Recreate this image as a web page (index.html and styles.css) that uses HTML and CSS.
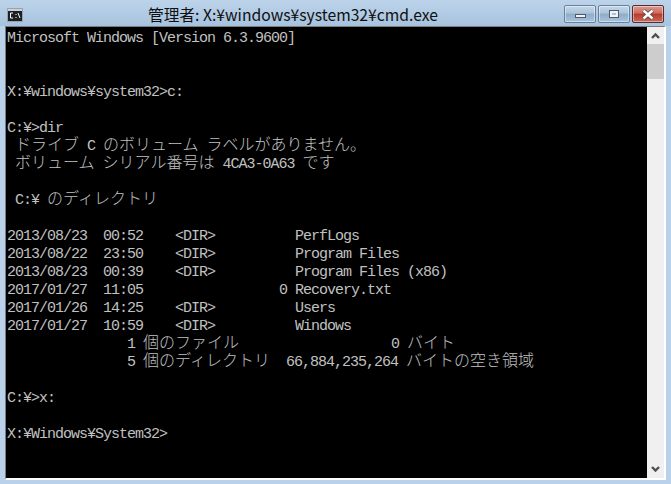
FILE: index.html
```html
<!DOCTYPE html>
<html lang="ja">
<head>
<meta charset="utf-8">
<title>cmd.exe</title>
<link rel="stylesheet" href="styles.css">
</head>
<body>
<div class="window">
  <header class="titlebar">
    <svg class="appicon" width="16" height="14" viewBox="0 0 16 14"><rect x="0.5" y="0.5" width="15" height="13" fill="#1c2024" stroke="#9aa3ab"/><rect x="1" y="1" width="14" height="2" fill="#c9d2da"/><path d="M6 5H3.5V10H6M9 6V7M9 9V10M11 5L13 10" fill="none" stroke="#fff"/></svg>
    <div class="title">管理者: X:¥windows¥system32¥cmd.exe</div>
    <div class="controls">
      <div class="btn"><span class="glyph-min"></span></div>
      <div class="btn"><span class="glyph-max"></span></div>
      <div class="btn close">
        <svg width="14" height="11" viewBox="0 0 14 11"><path d="M2.5 1.5L11.5 9.5M11.5 1.5L2.5 9.5" stroke="#4a4a4a" stroke-width="4"/><path d="M2.5 1.5L11.5 9.5M11.5 1.5L2.5 9.5" stroke="#fff" stroke-width="2.4"/></svg>
      </div>
    </div>
  </header>
  <div class="client">
    <main class="console">
<div class="ln">Microsoft Windows [Version 6.3.9600]</div>
<div class="ln"></div>
<div class="ln"></div>
<div class="ln">X:¥windows¥system32&gt;c:</div>
<div class="ln"></div>
<div class="ln">C:¥&gt;dir</div>
<div class="ln"> <span class="j">ドライブ</span> C <span class="j">のボリューム</span> <span class="j">ラベルがありません。</span></div>
<div class="ln"> <span class="j">ボリューム</span> <span class="j">シリアル番号は</span> 4CA3-0A63 <span class="j">です</span></div>
<div class="ln"></div>
<div class="ln"> C:¥ <span class="j">のディレクトリ</span></div>
<div class="ln"></div>
<div class="ln">2013/08/23  00:52    &lt;DIR&gt;          PerfLogs</div>
<div class="ln">2013/08/22  23:50    &lt;DIR&gt;          Program Files</div>
<div class="ln">2013/08/23  00:39    &lt;DIR&gt;          Program Files (x86)</div>
<div class="ln">2017/01/27  11:05                 0 Recovery.txt</div>
<div class="ln">2017/01/26  14:25    &lt;DIR&gt;          Users</div>
<div class="ln">2017/01/27  10:59    &lt;DIR&gt;          Windows</div>
<div class="ln">               1 <span class="j">個のファイル</span>                   0 <span class="j">バイト</span></div>
<div class="ln">               5 <span class="j">個のディレクトリ</span>  66,884,235,264 <span class="j">バイトの空き領域</span></div>
<div class="ln"></div>
<div class="ln">C:¥&gt;x:</div>
<div class="ln"></div>
<div class="ln">X:¥Windows¥System32&gt;</div>
    </main>
    <aside class="scrollbar">
      <div class="arrow"><svg width="9" height="7" viewBox="0 0 9 7"><path d="M1 6L4.5 2.5L8 6" fill="none" stroke="#505050" stroke-width="2.4"/></svg></div>
      <div class="thumb"></div>
      <div class="track"></div>
      <div class="arrow"><svg width="9" height="7" viewBox="0 0 9 7"><path d="M1 1L4.5 4.5L8 1" fill="none" stroke="#505050" stroke-width="2.4"/></svg></div>
    </aside>
  </div>
</div>
</body>
</html>
```

FILE: styles.css
```css
html, body {
  margin: 0;
  padding: 0;
  width: 671px;
  height: 484px;
  overflow: hidden;
  background: #b9d1ea;
}
.window {
  width: 671px;
  height: 484px;
  display: flex;
  flex-direction: column;
  background: #b9d1ea;
}
.titlebar {
  height: 26px;
  flex: none;
  display: flex;
  align-items: flex-start;
  padding-left: 7px;
  background: linear-gradient(#bcd3ea, #a8c3de);
}
.appicon {
  margin-top: 8px;
  flex: none;
}
.title {
  margin-left: 125px;
  margin-top: 3px;
  font: 15.7px/24px "Noto Sans CJK JP", sans-serif;
  color: #101010;
  white-space: pre;
  flex: none;
}
.controls {
  margin-left: auto;
  padding: 5px 7px 0 0;
  display: flex;
  gap: 2px;
}
.btn {
  width: 30px;
  height: 16px;
  border: 1px solid #6b8098;
  border-radius: 2px;
  box-shadow: inset 0 0 0 1px rgba(255,255,255,.45);
  background: linear-gradient(#c6d7e8, #aac3dc 45%, #8eabc8 50%, #a9c3dd);
  display: flex;
  align-items: center;
  justify-content: center;
}
.btn.close {
  border-color: #5c2a2a;
  background: linear-gradient(#dc9a90, #cf6a5c 45%, #b83a2c 50%, #c96a5a);
}
.glyph-min {
  display: block;
  width: 9px;
  height: 2px;
  margin-top: 4px;
  background: #eef2f6;
  border: 1px solid #4e5a68;
}
.glyph-max {
  display: block;
  width: 4px;
  height: 2px;
  background: #aac3dc;
  border: 2px solid #f0f3f6;
  outline: 1px solid #4e5a68;
}
.client {
  flex: none;
  height: 454px;
  margin-left: 5px;
  width: 661px;
  display: flex;
  border-top: 1px solid #7b7b7b;
  border-left: 1px solid #7b7b7b;
  border-bottom: 2px solid #fff;
  border-right: 2px solid #fff;
  box-sizing: border-box;
}
.console {
  flex: 1;
  background: #000;
  color: #c0c0c0;
  font: 15px/18px "Liberation Mono", monospace;
  letter-spacing: -1px;
  padding-top: 3px;
  overflow: hidden;
}
.ln {
  height: 18px;
  white-space: pre;
  padding-left: 1px;
}
.j {
  font: 300 16px/0 "Noto Sans CJK JP", sans-serif;
  letter-spacing: 0;
}
.scrollbar {
  flex: none;
  width: 17px;
  background: #f0f0f0;
  display: flex;
  flex-direction: column;
}
.arrow {
  height: 17px;
  flex: none;
  display: flex;
  align-items: center;
  justify-content: center;
}
.thumb {
  flex: none;
  height: 35px;
  background: #cdcdcd;
}
.track {
  flex: 1;
}
```
